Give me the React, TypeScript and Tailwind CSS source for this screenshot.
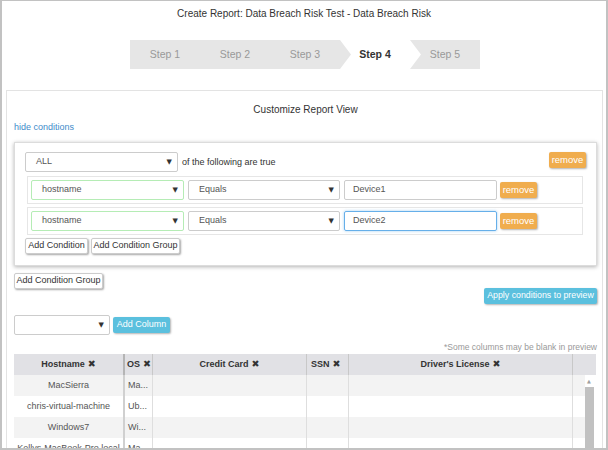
import React from "react";

const Sel = ({ text, w, cls, pl }: { text: string; w: string; cls: string; pl: string }) => (
  <div className={`${w} h-[20px] ${cls} rounded-[2px] bg-white flex items-center ${pl} pr-[5px] text-[9px] text-[#555] whitespace-nowrap`}>
    <span className="flex-1">{text}</span>
    <span className="text-[7px] text-[#333] font-['DejaVu_Sans',sans-serif]">▼</span>
  </div>
);

const Btn = ({ text, w }: { text: string; w: string }) => (
  <div className={`${w} h-[16px] bg-white border border-[#ccc] rounded-[2px] shadow-[1px_1px_2px_rgba(0,0,0,0.35)] flex items-center justify-center text-[9px] text-[#333] whitespace-nowrap`}>
    {text}
  </div>
);

const Remove = () => (
  <div className="w-[37px] h-[16px] bg-[#f0ad4e] rounded-[2px] shadow-[1px_1px_2px_rgba(0,0,0,0.3)] flex items-center justify-center text-[9.5px] text-white whitespace-nowrap">
    remove
  </div>
);

const X = () => <span className="font-['DejaVu_Sans',sans-serif] text-[9.5px] ml-[3px]">✖</span>;

const rows = [
  ["MacSierra", "Ma..."],
  ["chris-virtual-machine", "Ub..."],
  ["Windows7", "Wi..."],
  ["Kellys-MacBook-Pro.local", "Ma..."],
];

export default function App() {
  return (
    <div className="w-[608px] h-[450px] overflow-hidden bg-white border-x-2 border-b-2 border-t border-[#c2c2c2] font-['Liberation_Sans',Arial,sans-serif] text-[#333]">
      <div className="mt-[6px] h-[14px] leading-[14px] text-[10px] text-center">
        Create Report: Data Breach Risk Test - Data Breach Risk
      </div>
      <div className="mt-[19px] ml-[128px] w-[350px] h-[29px] bg-[#e6e6e6] flex text-[10.5px] text-[#999]">
        <div className="w-[70px] flex items-center justify-center">Step 1</div>
        <div className="w-[70px] flex items-center justify-center">Step 2</div>
        <div className="w-[70px] flex items-center justify-center">Step 3</div>
        <div className="w-[81px] mr-[-11px] bg-white [clip-path:polygon(0_0,70px_0,81px_50%,70px_100%,0_100%,11px_50%)] flex items-center justify-center pr-[11px] font-bold text-[#333]">
          Step 4
        </div>
        <div className="w-[70px] flex items-center justify-center">Step 5</div>
      </div>
      <div className="mt-[21px] ml-[4px] w-[597px] h-[400px] border border-[#e3e3e3] pl-[7px] pr-[5px]">
        <div className="mt-[12px] h-[14px] leading-[14px] text-[10px] text-center">Customize Report View</div>
        <div className="mt-[4px] h-[12px] leading-[12px] text-[9px] text-[#428bca]">hide conditions</div>
        <div className="mt-[9px] border border-[#dcdcdc] shadow-[0_1px_4px_rgba(0,0,0,0.3)] pt-[9px] pb-[11px] pl-[10px] pr-[10px]">
          <div className="flex items-start">
            <Sel text="ALL" w="w-[153px]" cls="border border-[#ccc]" pl="pl-[10px]" />
            <span className="ml-[4px] mt-[4px] text-[9px] text-[#333]">of the following are true</span>
            <div className="flex-1" />
            <Remove />
          </div>
          <div className="mt-[4px] ml-[2px] mr-[3px] h-[28px] border border-[#e6e6e6] flex items-center pl-[3px] gap-[4px]">
            <Sel text="hostname" w="w-[153px]" cls="border border-[#b5ecb5]" pl="pl-[10px]" />
            <Sel text="Equals" w="w-[152px]" cls="border border-[#ccc]" pl="pl-[10px]" />
            <div className="w-[153px] h-[20px] border border-[#ccc] rounded-[2px] flex items-center pl-[8px] text-[9px] text-[#555]">Device1</div>
            <div className="ml-[-1px]"><Remove /></div>
          </div>
          <div className="mt-[3px] ml-[2px] mr-[3px] h-[28px] border border-[#e6e6e6] flex items-center pl-[3px] gap-[4px]">
            <Sel text="hostname" w="w-[153px]" cls="border border-[#b5ecb5]" pl="pl-[10px]" />
            <Sel text="Equals" w="w-[152px]" cls="border border-[#ccc]" pl="pl-[10px]" />
            <div className="w-[153px] h-[20px] border border-[#66afe9] shadow-[0_0_3px_rgba(102,175,233,0.6)] rounded-[2px] flex items-center pl-[8px] text-[9px] text-[#555]">Device2</div>
            <div className="ml-[-1px]"><Remove /></div>
          </div>
          <div className="mt-[3px] flex gap-[3px]">
            <Btn text="Add Condition" w="w-[63px]" />
            <Btn text="Add Condition Group" w="w-[89px]" />
          </div>
        </div>
        <div className="mt-[7px] flex">
          <Btn text="Add Condition Group" w="w-[89px]" />
        </div>
        <div className="mt-[-1px] flex justify-end">
          <div className="w-[113px] h-[16px] bg-[#5bc0de] rounded-[2px] shadow-[1px_1px_2px_rgba(0,0,0,0.3)] flex items-center justify-center text-[8.8px] text-white whitespace-nowrap">
            Apply conditions to preview
          </div>
        </div>
        <div className="mt-[11px] flex items-center gap-[3px]">
          <Sel text="" w="w-[96px]" cls="border border-[#ccc]" pl="pl-[10px]" />
          <div className="w-[57px] h-[16px] bg-[#5bc0de] rounded-[2px] shadow-[1px_1px_2px_rgba(0,0,0,0.3)] flex items-center justify-center text-[9px] text-white whitespace-nowrap">
            Add Column
          </div>
        </div>
        <div className="mt-[6px] h-[12px] leading-[12px] text-right text-[8.5px] text-[#999]">*Some columns may be blank in preview</div>
        <div className="mt-[1px] w-[582px]">
          <div className="flex h-[21px] bg-[#e1e1e5] text-[9px] font-bold text-[#333]">
            <div className="w-[111px] flex items-center justify-center border-r-2 border-[#b5b5b5]">Hostname<X /></div>
            <div className="w-[28px] flex items-center pl-[2px] border-r border-[#c8c8c8] whitespace-nowrap">OS<X /></div>
            <div className="w-[154px] flex items-center justify-center border-r border-[#c8c8c8]">Credit Card<X /></div>
            <div className="w-[42px] flex items-center pl-[4px] border-r border-[#c8c8c8]">SSN<X /></div>
            <div className="w-[224px] flex items-center justify-center border-r border-[#c8c8c8]">Driver&apos;s License<X /></div>
            <div className="flex-1" />
          </div>
          <div className="flex">
            <div className="flex-1">
              {rows.map((r, i) => (
                <div key={i} className={`flex h-[21px] text-[9px] text-[#555] ${i % 2 === 0 ? "bg-[#f3f3f3]" : "bg-white"}`}>
                  <div className="w-[111px] flex items-center justify-center whitespace-nowrap overflow-hidden border-r-2 border-[#d0d0d0]">{r[0]}</div>
                  <div className="w-[28px] flex items-center pl-[3px] border-r border-[#dedede]">{r[1]}</div>
                  <div className="w-[154px] border-r border-[#dedede]" />
                  <div className="w-[42px] border-r border-[#dedede]" />
                  <div className="w-[224px] border-r border-[#dedede]" />
                  <div className="flex-1" />
                </div>
              ))}
            </div>
            <div className="w-[11px] bg-white flex flex-col items-start">
              <span className="mt-[4px] ml-[2px] text-[5px] leading-[5px] text-[#a0a0a0] font-['DejaVu_Sans',sans-serif]">▲</span>
              <div className="mt-[3px] w-[9px] h-[80px] bg-[#c1c1c1]" />
            </div>
          </div>
        </div>
      </div>
    </div>
  );
}
